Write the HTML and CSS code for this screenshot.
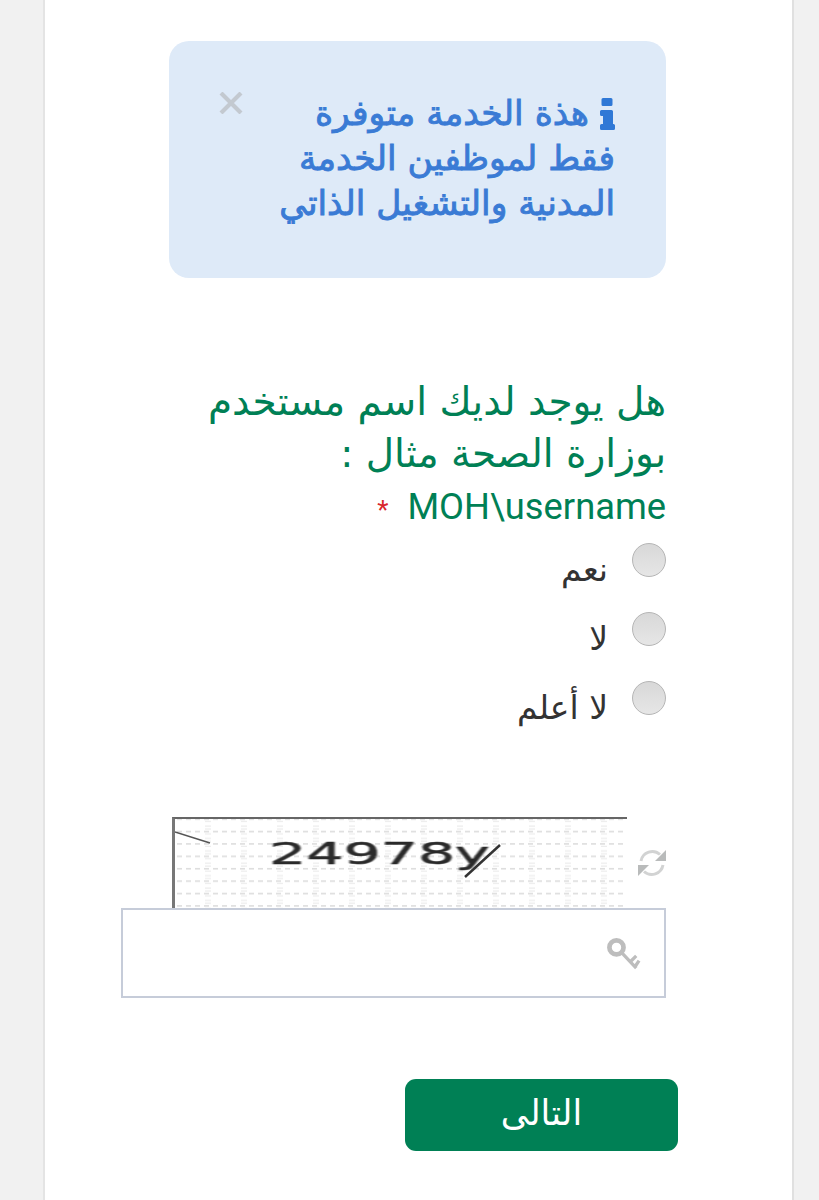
FILE: index.html
```html
<!DOCTYPE html>
<html lang="ar" dir="rtl">
<head>
<meta charset="utf-8">
<title>التالى</title>
<link rel="stylesheet" href="styles.css">
</head>
<body>
<main class="card">
  <div class="alert">
    <button class="alert-close" type="button" aria-label="close">
      <svg viewBox="0 0 24 22" width="24" height="22"><path d="M2 1 L22 21 M22 1 L2 21" stroke="#c3c9d0" stroke-width="4.2" fill="none"/></svg>
    </button>
    <p class="alert-text">
      <svg class="info-icon" viewBox="0 0 15 32" width="15" height="32"><path d="M3 0h8a1.500 1.500 0 0 1 1.500 1.500v5A1.500 1.500 0 0 1 11 8H3a1.500 1.500 0 0 1-1.500-1.500v-5A1.500 1.500 0 0 1 3 0zM1.500 12h10a1.500 1.500 0 0 1 1.500 1.500V26h.5A1.500 1.500 0 0 1 15 27.500v3a1.500 1.500 0 0 1-1.500 1.500h-12A1.500 1.500 0 0 1 0 30.500v-3A1.500 1.500 0 0 1 1.500 26H3v-8H1.500A1.500 1.500 0 0 1 0 16.500v-3A1.500 1.500 0 0 1 1.500 12z" fill="#2f78d6"/></svg>
      هذة الخدمة متوفرة<br>فقط لموظفين الخدمة<br>المدنية والتشغيل الذاتي
    </p>
  </div>

  <form class="form">
    <div class="question">هل يوجد لديك اسم مستخدم<br>بوزارة الصحة مثال :<br><span class="example" dir="ltr"><span class="req">*</span> MOH\username</span></div>
    <label class="choice"><span class="radio"></span><span class="choice-label">نعم</span></label>
    <label class="choice"><span class="radio"></span><span class="choice-label">لا</span></label>
    <label class="choice"><span class="radio"></span><span class="choice-label">لا أعلم</span></label>

    <div class="captcha-row">
      <svg class="refresh" viewBox="0 0 30 30" width="30" height="30">
        <path d="M4 13 A11.500 11.500 0 0 1 23 6.500" stroke="#d2d3d3" stroke-width="3" fill="none"/>
        <path d="M26 17 A11.500 11.500 0 0 1 7 23.500" stroke="#d2d3d3" stroke-width="3" fill="none"/>
        <path d="M29 2 V13 H18 Z" fill="#b9bbbb"/>
        <path d="M1 28 V17 H12 Z" fill="#b9bbbb"/>
      </svg>
      <div class="captcha" dir="ltr">
        <svg class="captcha-noise" width="452" height="89" viewBox="0 0 452 89">
          <defs>
            <pattern id="cg" width="36" height="12.400" patternUnits="userSpaceOnUse" y="6">
              <path d="M2 6.500 H7 M11 6.500 H16 M20 6.500 H25 M29 6.500 H34" stroke="#d2d2d2" stroke-width="1.200"/>
              <path d="M30 1 H38 M30 4 H38 M30 9 H38" stroke="#ececec" stroke-width="1.200"/>
            </pattern>
          </defs>
          <rect width="452" height="89" fill="url(#cg)"/>
          <path d="M0 13 L35 24" stroke="#555" stroke-width="1.500"/>
          <path d="M325 26 L290 58" stroke="#333" stroke-width="2.500"/>
        </svg>
        <span class="captcha-text">24978<span class="captcha-last">y</span></span>
      </div>
    </div>
    <div class="captcha-input">
      <svg class="key" viewBox="0 0 36 34" width="34" height="32">
        <circle cx="10" cy="10" r="7.500" stroke="#bdbdbd" stroke-width="5" fill="none"/>
        <path d="M15 15 L31 32 M25 25 L31 19 M30 30 L34 24" stroke="#bdbdbd" stroke-width="3.500" fill="none"/>
      </svg>
    </div>
    <button class="next" type="button">التالى</button>
  </form>
</main>
</body>
</html>
```
FILE: styles.css
```css
* { box-sizing: border-box; }
html, body { margin: 0; height: 1200px; overflow: hidden; }
body {
  background: #f1f1f1;
  font-family: Roboto, "DejaVu Sans", sans-serif;
  padding: 0 25px 0 43px;
}
.card {
  height: 1200px;
  background: #fff;
  border-left: 2px solid #e4e4e4;
  border-right: 2px solid #e0e0e0;
  padding: 41px 126px 0 76px;
  display: flex;
  flex-direction: column;
}
.alert {
  position: relative;
  width: 497px;
  height: 237px;
  background: #deeaf8;
  border-radius: 20px;
  padding: 50px 51px 0 0;
}
.alert-close {
  position: absolute;
  left: 50px;
  top: 51px;
  padding: 0;
  border: 0;
  background: none;
  line-height: 0;
}
.alert-text {
  margin: 0;
  color: #3a7bd5;
  font-family: "DejaVu Sans", sans-serif;
  font-size: 34.500px;
  -webkit-text-stroke: 0.9px #3a7bd5;
  line-height: 45px;
}
.info-icon { vertical-align: -5px; }
.form { display: flex; flex-direction: column; }
.question {
  margin-top: 98px;
  color: #008055;
  font-size: 39px;
  line-height: 52px;
  font-family: "DejaVu Sans", sans-serif;
}
.example { font-family: Roboto, sans-serif; font-size: 36.300px; }
.req { color: #d9262c; font-size: 26px; margin-right: 10px; }
.choice {
  display: flex;
  align-items: flex-start;
  gap: 24px;
  height: 69px;
  padding-top: 7px;
}
.radio {
  width: 34px;
  height: 34px;
  border-radius: 50%;
  border: 1px solid #b5b5b5;
  background: linear-gradient(#d8d8d8, #e6e6e6);
  flex: none;
}
.choice-label {
  color: #333;
  font-family: "DejaVu Sans", sans-serif;
  font-size: 33px;
  line-height: 54px;
}
.captcha-row {
  display: flex;
  align-items: center;
  gap: 10px;
  margin-top: 74px;
}
.refresh { flex: none; margin-right: -1px; }
.captcha {
  position: relative;
  width: 455px;
  height: 91px;
  border-top: 2px solid #666;
  border-left: 3px solid #777;
  background: #fff;
  overflow: hidden;
}
.captcha-noise { position: absolute; left: 0; top: 0; }
.captcha-text {
  position: absolute;
  left: 94px;
  top: 15px;
  font-family: "DejaVu Sans", sans-serif;
  font-size: 30px;
  -webkit-text-stroke: 0.5px #2a2a2a;
  line-height: 40px;
  color: #2a2a2a;
  transform: scaleX(1.950);
  transform-origin: left center;
  filter: blur(0.5px);
}
.captcha-last { font-weight: normal; }
.captcha-input {
  width: 545px;
  height: 90px;
  border: 2px solid #c6ccd9;
  background: #fff;
  display: flex;
  align-items: center;
  padding: 0 23px 0 0;
}
.key { flex: none; margin-top: 2px; }
.next {
  align-self: flex-start;
  width: 273px;
  height: 72px;
  margin: 81px -12px 0 0;
  border: 0;
  border-radius: 11px;
  background: #008055;
  color: #fff;
  font-family: "DejaVu Sans", sans-serif;
  font-size: 35px;
  padding: 0 0 4px;
}
```
